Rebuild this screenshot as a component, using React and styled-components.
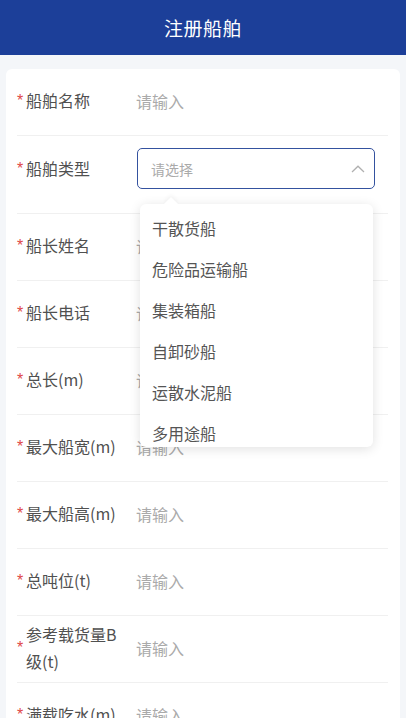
import React from "react";
import styled, { createGlobalStyle } from "styled-components";

const Global = createGlobalStyle`
  html, body { margin: 0; padding: 0; }
  body {
    font-family: "Noto Sans CJK SC", "Noto Sans", sans-serif;
    background: #f4f6f9;
  }
`;

const Page = styled.div`
  height: 100vh;
  overflow: hidden;
  background: #f4f6f9;
  display: flex;
  flex-direction: column;
`;

const Header = styled.header`
  flex: none;
  height: 55px;
  background: #1c3f99;
  color: #fff;
  display: flex;
  align-items: center;
  justify-content: center;
  font-size: 19px;
  letter-spacing: 0.5px;
`;

const Body = styled.main`
  padding: 14px 6px 0;
`;

const Card = styled.section`
  background: #fff;
  border-radius: 6px;
  padding: 0 12px 0 11px;
`;

const Row = styled.div`
  box-sizing: border-box;
  display: flex;
  align-items: center;
  min-height: ${(p) => (p.$tall ? "0" : "67px")};
  padding: ${(p) => (p.$tall ? "12px 0 24px" : "0 0 3px")};
  border-bottom: 1px solid #f0f0f0;
  &:last-child { border-bottom: none; }
`;

const Label = styled.div`
  flex: none;
  width: 110px;
  margin-right: 9px;
  display: flex;
  align-items: center;
  font-size: 16px;
  line-height: 27px;
  color: #505050;
`;

const Star = styled.span`
  flex: none;
  width: 9px;
  color: #e04848;
  font-size: 16px;
  font-family: "Liberation Sans", sans-serif;
`;

const LabelText = styled.span`
  flex: 1;
  min-width: 0;
  word-break: break-all;
`;

const Input = styled.div`
  flex: 1;
  font-size: 16px;
  color: #aaaaaa;
`;

const SelectWrap = styled.div`
  position: relative;
  flex: 1;
  margin-left: 1px;
  margin-right: 13px;
`;

const SelectBox = styled.div`
  height: 41px;
  box-sizing: border-box;
  border: 1.5px solid #34529f;
  border-radius: 5px;
  display: flex;
  align-items: center;
  justify-content: space-between;
  padding: 0 9px 0 13px;
  font-size: 14px;
  color: #aaaaaa;
`;

const Popup = styled.div`
  position: absolute;
  left: 3px;
  top: 56px;
  width: 233px;
  background: #fff;
  border-radius: 6px;
  box-shadow: 0 2px 12px rgba(0, 0, 0, 0.12);
  z-index: 10;
  &::before {
    content: "";
    position: absolute;
    left: 26px;
    top: -5px;
    width: 10px;
    height: 10px;
    background: #fff;
    transform: rotate(45deg);
    box-shadow: -2px -2px 4px rgba(0, 0, 0, 0.04);
  }
`;

const OptionList = styled.ul`
  position: relative;
  list-style: none;
  margin: 0;
  padding: 3.5px 0 0;
  height: 243px;
  box-sizing: border-box;
  overflow: hidden;
  border-radius: 6px;
`;

const Option = styled.li`
  height: 41px;
  display: flex;
  align-items: center;
  padding-left: 12px;
  font-size: 16px;
  color: #555;
`;

const Chevron = () => (
  <svg width="14" height="8" viewBox="0 0 14 8" fill="none">
    <path d="M1 7 L7 1.2 L13 7" stroke="#b0b0b0" strokeWidth="1.3" />
  </svg>
);

const fields = [
  "船舶名称",
  "船舶类型",
  "船长姓名",
  "船长电话",
  "总长(m)",
  "最大船宽(m)",
  "最大船高(m)",
  "总吨位(t)",
  "参考载货量B级(t)",
  "满载吃水(m)",
  "空载吃水(m)",
];

const options = ["干散货船", "危险品运输船", "集装箱船", "自卸砂船", "运散水泥船", "多用途船", "其他"];

export default function App() {
  return (
    <Page>
      <Global />
      <Header>注册船舶</Header>
      <Body>
        <Card>
          {fields.map((f) =>
            f === "船舶类型" ? (
              <Row key={f} $tall>
                <Label>
                  <Star>*</Star>
                  <LabelText>{f}</LabelText>
                </Label>
                <SelectWrap>
                  <SelectBox>
                    <span>请选择</span>
                    <Chevron />
                  </SelectBox>
                  <Popup>
                    <OptionList>
                      {options.map((o) => (
                        <Option key={o}>{o}</Option>
                      ))}
                    </OptionList>
                  </Popup>
                </SelectWrap>
              </Row>
            ) : (
              <Row key={f}>
                <Label>
                  <Star>*</Star>
                  <LabelText>{f}</LabelText>
                </Label>
                <Input>请输入</Input>
              </Row>
            )
          )}
        </Card>
      </Body>
    </Page>
  );
}
